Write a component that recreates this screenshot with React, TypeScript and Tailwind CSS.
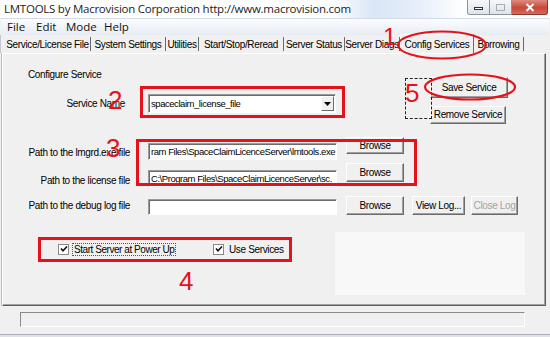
import React from "react";

const raised =
  "flex items-center justify-center bg-[#f0f0f0] border border-t-white border-l-white border-r-[#6b6b6b] border-b-[#6b6b6b] shadow-[inset_-1px_-1px_#a0a0a0] text-[10px] tracking-[-0.35px] leading-none";
const sunken =
  "bg-white border border-t-[#9a9a9a] border-l-[#9a9a9a] border-r-white border-b-white shadow-[inset_1px_1px_#6b6b6b] text-[9.5px] tracking-[-0.45px] leading-[14px] whitespace-nowrap overflow-hidden pl-[2px] pt-[1px]";

function Check() {
  return (
    <span className="flex h-[11px] w-[11px] items-center justify-center border border-[#8a8a8a] bg-white">
      <svg width="8" height="8" viewBox="0 0 8 8">
        <path d="M1 3.5 L3 5.8 L7 1.5" fill="none" stroke="#111" strokeWidth="1.6" />
      </svg>
    </span>
  );
}

const tabs = [
  { label: "Service/License File", cls: "w-[86px]" },
  { label: "System Settings", cls: "w-[75px]" },
  { label: "Utilities", cls: "w-[33px]" },
  { label: "Start/Stop/Reread", cls: "w-[85px]" },
  { label: "Server Status", cls: "w-[61px]" },
  { label: "Server Diags", cls: "w-[55px]" },
];

export default function App() {
  return (
    <div className="relative h-[337px] w-[550px] overflow-hidden bg-[#f0f0f0] font-['Liberation_Sans',Arial,sans-serif] text-black">
      {/* title bar */}
      <div className="flex h-[18px] items-start bg-[linear-gradient(90deg,#fff_60%,#d9e6f6_68%,#e6eef8_76%,#fdfeff_84%,#fff_100%)]">
        <span className="pl-[4px] pt-[2px] font-['Open_Sans',sans-serif] text-[11.5px] leading-[14px] tracking-[-0.25px] text-[#1c1c1c]">
          LMTOOLS by Macrovision Corporation http://www.macrovision.com
        </span>
        <div className="ml-auto mr-[2px] flex h-[15px]">
          <div className="flex w-[23px] items-center justify-center rounded-bl-[3px] border border-t-0 border-[#8d939c] bg-[linear-gradient(#f5f7fa,#dfe4ea)]">
            <span className="mt-[3px] h-[3px] w-[9px] border border-[#333] bg-white" />
          </div>
          <div className="flex w-[22px] items-center justify-center border-b border-r border-[#8d939c] bg-[linear-gradient(#f5f7fa,#dfe4ea)]">
            <span className="h-[7px] w-[9px] border border-[#a8adb4]" />
          </div>
          <div className="flex w-[36px] items-center justify-center rounded-br-[3px] border-b border-r border-[#8a3a30] bg-[linear-gradient(#e08a7e,#c9473a_55%,#d46a58)]">
            <svg width="10" height="9" viewBox="0 0 10 9">
              <path d="M1.5 1 L8.5 8 M8.5 1 L1.5 8" stroke="#fff" strokeWidth="2" />
            </svg>
          </div>
        </div>
      </div>

      {/* menu bar */}
      <div className="mx-[1px] flex h-[17px] items-center border-t border-[#d4dceb] bg-[linear-gradient(#fbfcfe,#e7ecf4)] font-['Open_Sans',sans-serif] text-[11.5px] text-[#111]">
        <span className="ml-[6px] w-[29px]">File</span>
        <span className="w-[30px]">Edit</span>
        <span className="w-[38px]">Mode</span>
        <span>Help</span>
      </div>

      {/* tabs */}
      <div className="flex h-[18px] items-end border-l border-[#c4c8ce] pl-[4px] text-[10px] tracking-[-0.35px]">
        {tabs.map((t) => (
          <div
            key={t.label}
            className={`${t.cls} mb-[2px] flex h-[14px] items-center justify-center overflow-hidden whitespace-nowrap border-r border-[#6b6b6b]`}
          >
            {t.label}
          </div>
        ))}
        <div className="flex h-[19px] w-[74px] items-center justify-center whitespace-nowrap border border-b-0 border-t-white border-l-white border-r-[#6b6b6b]">
          Config Services
        </div>
        <div className="mb-[2px] flex h-[14px] w-[50px] items-center justify-center border-r border-[#6b6b6b]">
          Borrowing
        </div>
      </div>

      {/* panel */}
      <div className="ml-[2px] h-[253px] w-[544px] border border-t-white border-l-white border-r-[#5e5e5e] border-b-[#5e5e5e] text-[10px] tracking-[-0.35px] shadow-[inset_-1px_-1px_#a0a0a0,-1px_0_#b9bec6]">
        <div className="flex h-[76px]">
          <div className="w-[424px]">
            <div className="ml-[25px] mt-[15px] h-[12px] leading-[12px]">Configure Service</div>
            <div className="mt-[13px] flex h-[19px] items-center">
              <span className="w-[122px] text-right">Service Name</span>
              <div className={`${sunken} ml-[23px] flex h-[19px] w-[188px] items-center !pt-0`}>
                <span className="flex-1">spaceclaim_license_file</span>
                <div className="mr-[1px] flex h-[15px] w-[13px] items-center justify-center border border-t-white border-l-white border-r-[#6b6b6b] border-b-[#6b6b6b] bg-[#f0f0f0]">
                  <svg width="7" height="4" viewBox="0 0 7 4">
                    <path d="M0 0 H7 L3.5 4 Z" fill="#000" />
                  </svg>
                </div>
              </div>
            </div>
          </div>
          <div className="ml-[3px] flex flex-col pt-[23px]">
            <div className={`${raised} h-[21px] w-[78px]`}>Save Service</div>
            <div className={`${raised} mt-[8px] h-[18px] w-[76px]`}>Remove Service</div>
          </div>
        </div>

        <div className="mt-[7px] flex h-[26px] items-start">
          <span className="mt-[10px] w-[127px] text-right leading-[12px]">Path to the lmgrd.exe file</span>
          <div className={`${sunken} ml-[18px] mt-[6px] h-[17px] w-[189px]`}>
            ram Files\SpaceClaimLicenceServer\lmtools.exe
          </div>
          <div className={`${raised} ml-[9px] h-[17px] w-[58px]`}>Browse</div>
        </div>

        <div className="flex h-[33px] items-start">
          <span className="mt-[12px] w-[127px] text-right leading-[12px]">Path to the license file</span>
          <div className={`${sunken} ml-[18px] mt-[7px] h-[17px] w-[189px]`}>
            C:\Program Files\SpaceClaimLicenceServer\sc.
          </div>
          <div className={`${raised} ml-[9px] h-[19px] w-[58px]`}>Browse</div>
        </div>

        <div className="flex h-[19px] items-start">
          <span className="mt-[4px] w-[127px] text-right leading-[12px]">Path to the debug log file</span>
          <div className={`${sunken} ml-[18px] mt-[3px] h-[16px] w-[189px]`} />
          <div className={`${raised} ml-[9px] h-[19px] w-[58px]`}>Browse</div>
          <div className={`${raised} ml-[8px] h-[19px] w-[53px]`}>View Log...</div>
          <div className={`${raised} ml-[6px] h-[19px] w-[47px] text-[#a3a3a3]`}>Close Log</div>
        </div>

        <div className="mt-[28px] flex h-[12px] items-center">
          <div className="ml-[55px] flex w-[155px] items-center">
            <Check />
            <span className="ml-[3px] border border-dotted border-[#555] px-[1px] leading-[11px] tracking-[-0.45px]">
              Start Server at Power Up
            </span>
          </div>
          <Check />
          <span className="ml-[5px]">Use Services</span>
        </div>
      </div>

      {/* status bar */}
      <div className="ml-[20px] mt-[6px] h-[15px] w-[505px] border border-t-[#8a8a8a] border-l-[#8a8a8a] border-b-white border-r-white" />
      <div className="absolute bottom-0 left-0 h-[3px] w-full border-t border-[#a9aeb6] bg-[#dfe3e8]" />

      {/* erased watermark */}
      <div className="absolute left-[335px] top-[232px] h-[63px] w-[190px] bg-[#f8f8f8]" />

      {/* annotations */}
      <span className="absolute left-[383px] top-[25px] text-[24px] leading-none text-[#e5121b]">1</span>
      <svg className="absolute left-[396px] top-[29px]" width="92" height="32" viewBox="0 0 92 32">
        <ellipse cx="46" cy="16" rx="44" ry="13.5" fill="none" stroke="#e5121b" strokeWidth="2" />
      </svg>

      <span className="absolute left-[108px] top-[87px] text-[26px] leading-none text-[#e5121b]">2</span>
      <div className="absolute left-[140px] top-[86px] h-[32px] w-[205px] border-[3px] border-[#e5121b]" />

      <div className="absolute left-[405px] top-[78px] h-[41px] w-[27px] border border-dashed border-[#222]" />
      <span className="absolute left-[405px] top-[80px] text-[26px] leading-none text-[#e5121b]">5</span>
      <svg className="absolute left-[423px] top-[72px]" width="94" height="30" viewBox="0 0 94 30">
        <ellipse cx="47" cy="15" rx="45" ry="12.5" fill="none" stroke="#e5121b" strokeWidth="2.2" />
      </svg>

      <span className="absolute left-[106px] top-[135px] text-[26px] leading-none text-[#e5121b]">3</span>
      <div className="absolute left-[136px] top-[139px] h-[47px] w-[281px] border-[3px] border-[#e5121b]" />

      <div className="absolute left-[38px] top-[237px] h-[25px] w-[254px] border-[3px] border-[#e5121b]" />
      <span className="absolute left-[179px] top-[268px] text-[26px] leading-none text-[#e5121b]">4</span>
    </div>
  );
}
